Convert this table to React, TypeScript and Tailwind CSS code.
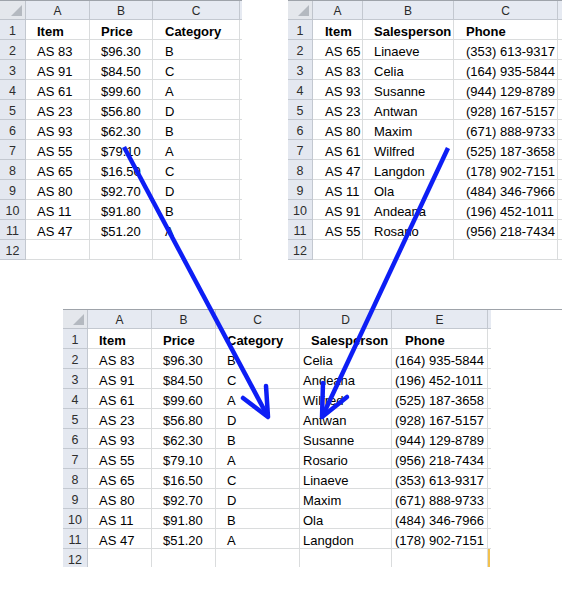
import clsx from 'clsx'

interface Col {
  label: string
  w: string
  pad: string
  hpad?: string
}

interface SheetProps {
  cols: Col[]
  rows: string[][]
  numW: string
  tail: string
  height: string
  orange?: boolean
}

const cellBase = 'shrink-0 h-[20px] border-r border-b whitespace-nowrap'

function Sheet({ cols, rows, numW, tail, height, orange }: SheetProps) {
  const all = [...rows, cols.map(() => '')]
  return (
    <div className={clsx('overflow-hidden shrink-0', height)}>
      {/* column letters */}
      <div className="flex border-t border-[#9ea3aa]">
        <div className={clsx(numW, 'relative shrink-0 h-[19px] border-r border-b border-[#bfc4cc] bg-[#e4e7ec]')}>
          <div className="absolute right-[3px] bottom-[3px] w-0 h-0 border-l-[11px] border-l-transparent border-b-[11px] border-b-[#b4b9c0]" />
        </div>
        {cols.map((c) => (
          <div
            key={c.label}
            className={clsx(c.w, 'shrink-0 h-[19px] border-r border-b border-[#c3c8d0] bg-[#e6eaf2] text-center text-[12px] leading-[14px] pt-[3px] text-[#2a2a2a]')}
          >
            {c.label}
          </div>
        ))}
        <div className={clsx(tail, 'shrink-0 h-[19px] border-b border-[#c3c8d0] bg-[#e6eaf2]')} />
      </div>

      {all.map((r, i) => (
        <div key={i} className="flex">
          <div className={clsx(numW, cellBase, 'border-[#c3c8d0] bg-[#e4e8f0] text-center text-[12.5px] leading-[14px] pt-[4px] text-[#2e2e2e]')}>
            {i + 1}
          </div>
          {cols.map((c, j) => (
            <div
              key={j}
              className={clsx(
                c.w,
                cellBase,
                'border-[#dadcdd] text-[13px] leading-[14px] pt-[5px] text-black',
                i === 0 ? clsx('font-bold', c.hpad ?? c.pad) : c.pad
              )}
            >
              {r[j]}
            </div>
          ))}
          <div
            className={clsx(
              tail,
              'shrink-0 h-[20px] border-b border-[#dadcdd]',
              orange && i === all.length - 1 && 'border-l-2 border-l-[#f2c14e]'
            )}
          />
        </div>
      ))}
    </div>
  )
}

const leftRows = [
  ['Item', 'Price', 'Category'],
  ['AS 83', '$96.30', 'B'],
  ['AS 91', '$84.50', 'C'],
  ['AS 61', '$99.60', 'A'],
  ['AS 23', '$56.80', 'D'],
  ['AS 93', '$62.30', 'B'],
  ['AS 55', '$79.10', 'A'],
  ['AS 65', '$16.50', 'C'],
  ['AS 80', '$92.70', 'D'],
  ['AS 11', '$91.80', 'B'],
  ['AS 47', '$51.20', 'A'],
]

const rightRows = [
  ['Item', 'Salesperson', 'Phone'],
  ['AS 65', 'Linaeve', '(353) 613-9317'],
  ['AS 83', 'Celia', '(164) 935-5844'],
  ['AS 93', 'Susanne', '(944) 129-8789'],
  ['AS 23', 'Antwan', '(928) 167-5157'],
  ['AS 80', 'Maxim', '(671) 888-9733'],
  ['AS 61', 'Wilfred', '(525) 187-3658'],
  ['AS 47', 'Langdon', '(178) 902-7151'],
  ['AS 11', 'Ola', '(484) 346-7966'],
  ['AS 91', 'Andeana', '(196) 452-1011'],
  ['AS 55', 'Rosario', '(956) 218-7434'],
]

const mergedRows = [
  ['Item', 'Price', 'Category', 'Salesperson', 'Phone'],
  ['AS 83', '$96.30', 'B', 'Celia', '(164) 935-5844'],
  ['AS 91', '$84.50', 'C', 'Andeana', '(196) 452-1011'],
  ['AS 61', '$99.60', 'A', 'Wilfred', '(525) 187-3658'],
  ['AS 23', '$56.80', 'D', 'Antwan', '(928) 167-5157'],
  ['AS 93', '$62.30', 'B', 'Susanne', '(944) 129-8789'],
  ['AS 55', '$79.10', 'A', 'Rosario', '(956) 218-7434'],
  ['AS 65', '$16.50', 'C', 'Linaeve', '(353) 613-9317'],
  ['AS 80', '$92.70', 'D', 'Maxim', '(671) 888-9733'],
  ['AS 11', '$91.80', 'B', 'Ola', '(484) 346-7966'],
  ['AS 47', '$51.20', 'A', 'Langdon', '(178) 902-7151'],
]

export default function App() {
  return (
    <div className="relative w-[562px] h-[600px] bg-white overflow-hidden font-['Liberation_Sans',Arial,sans-serif]">
      {/* source sheets */}
      <div className="flex">
        <Sheet
          numW="w-[26px]"
          tail="w-[2px]"
          height="h-[260px]"
          rows={leftRows}
          cols={[
            { label: 'A', w: 'w-[64px]', pad: 'pl-[11px]' },
            { label: 'B', w: 'w-[63px]', pad: 'pl-[11px]' },
            { label: 'C', w: 'w-[87px]', pad: 'pl-[12px]' },
          ]}
        />
        <div className="ml-[46px]">
          <Sheet
            numW="w-[25px]"
            tail="w-[10px]"
            height="h-[260px]"
            rows={rightRows}
            cols={[
              { label: 'A', w: 'w-[50px]', pad: 'pl-[12px]' },
              { label: 'B', w: 'w-[91px]', pad: 'pl-[11px]' },
              { label: 'C', w: 'w-[104px]', pad: 'pl-[12px]' },
            ]}
          />
        </div>
      </div>

      {/* merged sheet */}
      <div className="ml-[63px] mt-[49px]">
        <Sheet
          numW="w-[25px]"
          tail="w-[3px]"
          height="h-[258px]"
          orange
          rows={mergedRows}
          cols={[
            { label: 'A', w: 'w-[64px]', pad: 'pl-[11px]' },
            { label: 'B', w: 'w-[64px]', pad: 'pl-[11px]' },
            { label: 'C', w: 'w-[84px]', pad: 'pl-[11px]' },
            { label: 'D', w: 'w-[92px]', pad: 'pl-[3px]', hpad: 'pl-[11px]' },
            { label: 'E', w: 'w-[96px]', pad: 'pl-[3px]', hpad: 'pl-[13px]' },
          ]}
        />
      </div>

      {/* arrows */}
      <svg className="absolute inset-0 pointer-events-none" width="562" height="600" viewBox="0 0 562 600">
        <g stroke="#0d1ef5" strokeWidth="4.5" fill="none" strokeLinejoin="round">
          <line x1="124" y1="147" x2="267" y2="415" />
          <polyline points="243,398 268,417 266,386" strokeLinecap="round" />
          <line x1="448" y1="148" x2="323" y2="415" />
          <polyline points="323,383 322,417 347,397" strokeLinecap="round" />
        </g>
      </svg>
    </div>
  )
}
